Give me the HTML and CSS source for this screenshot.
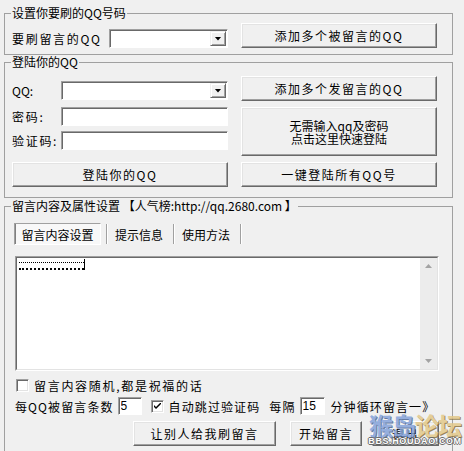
FILE: index.html
```html
<!DOCTYPE html>
<html lang="zh-CN">

<head>
  <meta charset="UTF-8">
  <title>QQ留言</title>
  <link rel="stylesheet" href="styles.css">
</head>

<body>
  <div class="window">
    <!-- doel QQ -->
    <fieldset class="group group-target">
      <legend>设置你要刷的QQ号码</legend>
      <div class="grid">
        <div class="field field-end">
          <span class="label label-wide">要刷留言的QQ</span>
          <div class="combo"><span class="combo-arrow"></span></div>
        </div>
        <button class="button">添加多个被留言的QQ</button>
      </div>
    </fieldset>

    <!-- inloggen -->
    <fieldset class="group group-login">
      <legend>登陆你的QQ</legend>
      <div class="grid grid-login">
        <div class="field field-end field-combo">
          <span class="label label-narrow label-plain">QQ:</span>
          <div class="combo"><span class="combo-arrow"></span></div>
        </div>
        <button class="button">添加多个发留言的QQ</button>
        <div class="inputs">
          <div class="field">
            <span class="label label-narrow">密码:</span>
            <input class="edit" type="password">
          </div>
          <div class="field">
            <span class="label label-narrow">验证码:</span>
            <input class="edit" type="text">
          </div>
        </div>
        <button class="button button-tall">无需输入qq及密码<br>点击这里快速登陆</button>
        <button class="button">登陆你的QQ</button>
        <button class="button">一键登陆所有QQ号</button>
      </div>
    </fieldset>

    <!-- berichtinstellingen -->
    <fieldset class="group group-message">
      <legend>留言内容及属性设置 【人气榜:http://qq.2680.com 】</legend>
      <div class="tabs">
        <span class="tab tab-active">留言内容设置</span>
        <span class="tab-sep"></span>
        <span class="tab">提示信息</span>
        <span class="tab-sep"></span>
        <span class="tab">使用方法</span>
        <span class="tab-sep"></span>
      </div>

      <div class="memo">
        <div class="memo-inner">
          <div class="memo-text"><span class="dots"></span><span class="caret"></span></div>
          <div class="scrollbar">
            <span class="arrow arrow-up"></span>
            <span class="arrow arrow-down"></span>
          </div>
        </div>
      </div>

      <label class="check-row">
        <span class="box"></span>
        <span>留言内容随机,都是祝福的话</span>
      </label>

      <div class="options">
        <span>每QQ被留言条数</span>
        <input class="edit edit-small" type="text" value="5">
        <span class="box box-checked">
          <svg width="7" height="7" viewBox="0 0 7 7"><path d="M0 2 L0 4 L2 6 L7 1 L7 -1 L2 4 Z" fill="#000"/></svg>
        </span>
        <span>自动跳过验证码</span>
        <span class="opt-gap">每隔</span>
        <input class="edit edit-small edit-wider" type="text" value="15">
        <span class="opt-tail">分钟循环留言一》</span>
      </div>

      <div class="actions">
        <button class="button btn-invite">让别人给我刷留言</button>
        <button class="button btn-start">开始留言</button>
        <button class="button btn-exit">退出</button>
      </div>
    </fieldset>

    <!-- watermerk over de hoek -->
    <div class="watermark">
      <div class="wm-title"><span class="wm-blue">猴岛</span><span class="wm-gold">论坛</span></div>
      <div class="wm-url">BBS.HOUDAO.COM</div>
    </div>
  </div>
</body>

</html>
```

FILE: styles.css
```css
/* Basis: Windows-grijs venster */
body {
  margin: 0;
  background-color: #f0f0f0;
  color: #000;
  font-family: "Noto Sans CJK SC", sans-serif;
  font-size: 12px;
}

.window {
  position: relative;
  width: 464px;
  height: 451px;
  overflow: hidden;
  padding: 6px 0 0 4px;
  box-sizing: border-box;
}

/* Groepskaders */
.group {
  width: 449px;
  min-width: 0;
  box-sizing: border-box;
  margin: 0;
  border: 1px solid #a0a0a0;
}

.group legend {
  padding: 0 1px;
  margin-left: -1px;
  line-height: 14px;
  font-size: 12px;
}

.group-target {
  padding: 3px 15px 6px 7px;
}

.group-login {
  padding: 7px 15px 10px 7px;
}

.group-message {
  margin-top: 1px;
  padding: 10px 13px 40px 9px;
}

.group-message legend {
  margin-left: -3px;
}

/* Twee kolommen: velden links, knoppen rechts */
.grid {
  display: grid;
  grid-template-columns: 216px 196px;
  grid-template-rows: 25px;
  column-gap: 13px;
}

.grid-login {
  grid-template-rows: 25px 49px 25px;
  row-gap: 6px;
}

.field {
  display: flex;
  align-items: center;
}

.field-end {
  align-self: end;
}

.field-combo {
  margin-bottom: 1px;
}

.label {
  letter-spacing: 1.7px;
  white-space: nowrap;
  flex-shrink: 0;
}

.label-wide {
  width: 97px;
}

.label-narrow {
  width: 49px;
}

.label-plain {
  letter-spacing: 0;
}

.inputs {
  display: flex;
  flex-direction: column;
  gap: 5px;
}

/* Keuzelijst */
.combo {
  flex: 1;
  height: 19px;
  box-sizing: border-box;
  padding: 1px;
  background: #fff;
  border: 1px solid;
  border-color: #a0a0a0 #fff #fff #a0a0a0;
  box-shadow: inset 1px 1px #696969;
  display: flex;
  justify-content: flex-end;
}

.combo-arrow {
  width: 16px;
  height: 100%;
  box-sizing: border-box;
  background: #f0f0f0;
  border: 1px solid;
  border-color: #f0f0f0 #696969 #696969 #f0f0f0;
  box-shadow: inset 1px 1px #fff, inset -1px -1px #a0a0a0;
  display: flex;
  align-items: center;
  justify-content: center;
}

.combo-arrow::after {
  content: "";
  width: 7px;
  height: 4px;
  background: #000;
  clip-path: polygon(0 0, 100% 0, 50% 100%);
}

/* Invoervelden */
.edit {
  width: 167px;
  height: 19px;
  box-sizing: border-box;
  margin: 0;
  padding: 0 2px;
  background: #fff;
  border: 1px solid;
  border-color: #a0a0a0 #fff #fff #a0a0a0;
  box-shadow: inset 1px 1px #696969;
  font: inherit;
  letter-spacing: 0;
  outline: none;
}

.edit-small {
  width: 24px;
  height: 18px;
  margin-left: 4px;
  font-family: "Liberation Sans", sans-serif;
}

.edit-wider {
  width: 25px;
}

/* Knoppen */
.button {
  height: 25px;
  margin: 0;
  padding: 0;
  background: #f0f0f0;
  color: #000;
  font: inherit;
  letter-spacing: 1.5px;
  border: 1px solid;
  border-color: #fff #696969 #696969 #fff;
  box-shadow: inset -1px -1px #a0a0a0, inset 1px 1px #e3e3e3;
}

.button-tall {
  height: 49px;
  line-height: 13px;
  letter-spacing: 0;
}

/* Tabbladen */
.tabs {
  display: flex;
  height: 22px;
}

.tab {
  display: flex;
  align-items: center;
  padding: 0 10px 0 8px;
}

.tab-active {
  width: 87px;
  box-sizing: border-box;
  justify-content: center;
  padding: 0;
  margin-right: 5px;
  background: #f8f8f8;
  border: 1px solid;
  border-color: #a0a0a0 #fff #fff #a0a0a0;
  box-shadow: inset 1px 0 #808080;
}

.tab-sep {
  width: 1px;
  margin: 1px 0;
  background: #a0a0a0;
  box-shadow: 1px 0 #fff;
}

/* Tekstvak met schuifbalk */
.memo {
  width: 424px;
  height: 115px;
  margin: 11px 0 0 1px;
  box-sizing: border-box;
  border: 1px solid;
  border-color: #a0a0a0 #fff #fff #a0a0a0;
}

.memo-inner {
  height: 100%;
  box-sizing: border-box;
  display: flex;
  background: #fff;
  border: 1px solid;
  border-color: #696969 #e3e3e3 #e3e3e3 #696969;
}

.memo-text {
  flex: 1;
  display: flex;
  align-items: flex-start;
  padding-left: 2px;
}

.dots {
  width: 65px;
  height: 8px;
  box-sizing: border-box;
  margin-top: 4px;
  border-top: 1px dotted #000;
  border-bottom: 2px dotted #000;
}

.caret {
  width: 1px;
  height: 11px;
  margin-top: 1px;
  background: #000;
}

.scrollbar {
  width: 17px;
  background: #ececec;
  display: flex;
  flex-direction: column;
  justify-content: space-between;
  align-items: center;
  padding: 6px 0;
  box-sizing: border-box;
}

.arrow {
  width: 7px;
  height: 4px;
  background: #a3a3a3;
}

.arrow-up {
  clip-path: polygon(50% 0, 100% 100%, 0 100%);
}

.arrow-down {
  clip-path: polygon(0 0, 100% 0, 50% 100%);
}

/* Selectievakjes en opties */
.check-row {
  display: flex;
  align-items: center;
  height: 13px;
  margin: 8px 0 0 2px;
  letter-spacing: 1.7px;
  white-space: nowrap;
}

.box {
  width: 13px;
  height: 13px;
  box-sizing: border-box;
  flex-shrink: 0;
  margin-right: 5px;
  background: #fff;
  border: 1px solid;
  border-color: #a0a0a0 #fff #fff #a0a0a0;
  box-shadow: inset 1px 1px #696969, inset -1px -1px #e3e3e3;
  display: flex;
  align-items: center;
  justify-content: center;
}

.options {
  display: flex;
  align-items: center;
  height: 18px;
  margin: 5px 0 0 1px;
  letter-spacing: 1.1px;
  white-space: nowrap;
}

.options .box {
  margin-left: 9px;
}

.opt-gap {
  margin-left: 9px;
}

.opt-tail {
  margin-left: 6px;
}

.actions {
  display: flex;
  height: 25px;
  margin-top: 6px;
  padding-left: 119px;
}

.btn-invite {
  width: 143px;
}

.btn-start {
  width: 72px;
  margin-left: 14px;
}

.btn-exit {
  width: 67px;
  margin-left: 10px;
}

/* Watermerk rechtsonder */
.watermark {
  position: absolute;
  right: 1px;
  bottom: 5px;
  width: 96px;
  text-align: center;
  opacity: 0.85;
  pointer-events: none;
}

.wm-title {
  font-size: 24px;
  font-weight: bold;
  line-height: 25px;
  letter-spacing: -1px;
}

.wm-blue {
  color: #86a3da;
  text-shadow: 1px 1px #4d6796;
}

.wm-gold {
  color: #e3c98a;
  text-shadow: 1px 1px #8c7340;
}

.wm-url {
  font-family: "Liberation Sans", sans-serif;
  font-size: 9px;
  font-weight: bold;
  line-height: 9px;
  letter-spacing: 0.6px;
  color: #fff;
  text-shadow: 1px 0 #555, -1px 0 #555, 0 1px #555, 0 -1px #555;
}
```
